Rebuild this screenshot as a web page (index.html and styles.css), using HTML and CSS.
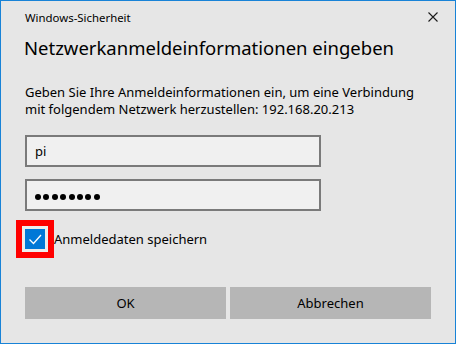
FILE: index.html
```html
<!DOCTYPE html>
<html lang="de">
<head>
    <meta charset="UTF-8">
    <title>Windows-Sicherheit</title>
    <link rel="stylesheet" href="styles.css">
</head>
<body>
    <div class="dialog">
        <div class="titlebar">
            <span class="title">Windows-Sicherheit</span>
            <span class="close">
                <svg width="10" height="10" viewBox="0 0 10 10">
                    <path d="M0.5 0.5 L9.5 9.5 M9.5 0.5 L0.5 9.5" stroke="#1a1a1a" stroke-width="1.1" fill="none"/>
                </svg>
            </span>
        </div>
        <h1>Netzwerkanmeldeinformationen eingeben</h1>
        <p class="info">Geben Sie Ihre Anmeldeinformationen ein, um eine Verbindung mit folgendem Netzwerk herzustellen: 192.168.20.213</p>

        <div class="fields">
            <div class="field">pi</div>
            <div class="field dots">
                <span></span><span></span><span></span><span></span>
                <span></span><span></span><span></span><span></span>
            </div>
        </div>

        <div class="remember">
            <span class="focus">
                <span class="check">
                    <svg width="20" height="20" viewBox="0 0 20 20">
                        <path d="M4.5 10.5 L8.5 14.5 L16 6" stroke="#fff" stroke-width="1.3" fill="none"/>
                    </svg>
                </span>
            </span>
            <span class="label">Anmeldedaten speichern</span>
        </div>

        <div class="buttons">
            <div class="btn">OK</div>
            <div class="btn">Abbrechen</div>
        </div>
    </div>
</body>
</html>
```

FILE: styles.css
```css
body {
    margin: 0;
    font-family: 'Noto Sans', 'Open Sans', sans-serif;
    color: #000;
}
.dialog {
    width: 456px;
    height: 344px;
    box-sizing: border-box;
    border: 1px solid #1883d7;
    background: #e6e6e6;
    padding: 0 24px 0 23px;
}
.titlebar {
    display: flex;
    justify-content: space-between;
    align-items: center;
    height: 32px;
}
.title {
    font-size: 11.4px;
    padding-left: 1px;
}
.close {
    display: flex;
    margin-right: -7px;
}
.dialog h1 {
    font-size: 18.5px;
    font-weight: 400;
    margin: 1px 0 0 0;
    line-height: 28px;
    color: #000;
}
.info {
    font-size: 13px;
    line-height: 17px;
    margin: 22px 0 0 1px;
}
.fields {
    display: flex;
    flex-direction: column;
    gap: 12px;
    margin: 17px 0 0 1px;
}
.field {
    width: 296px;
    height: 32px;
    box-sizing: border-box;
    border: 2px solid #7a7a7a;
    background: #f0f0f0;
    font-size: 13px;
    padding-left: 8px;
    display: flex;
    align-items: center;
}
.dots {
    gap: 2.4px;
    padding-left: 8px;
}
.dots span {
    width: 6px;
    height: 6px;
    margin-top: 3px;
    border-radius: 50%;
    background: #000;
}
.remember {
    display: flex;
    align-items: center;
    margin: 9px 0 0 -8px;
}
.focus {
    border: 6px solid #ff0000;
    padding: 3px;
    background: #ededed;
    display: flex;
}
.check {
    width: 20px;
    height: 20px;
    background: #0078d7;
    display: flex;
}
.label {
    font-size: 13px;
}
.buttons {
    display: flex;
    gap: 4px;
    margin: 29px 0 0 1px;
}
.btn {
    width: 201px;
    height: 32px;
    background: #b6b6b6;
    font-size: 13px;
    display: flex;
    align-items: center;
    justify-content: center;
}
```
